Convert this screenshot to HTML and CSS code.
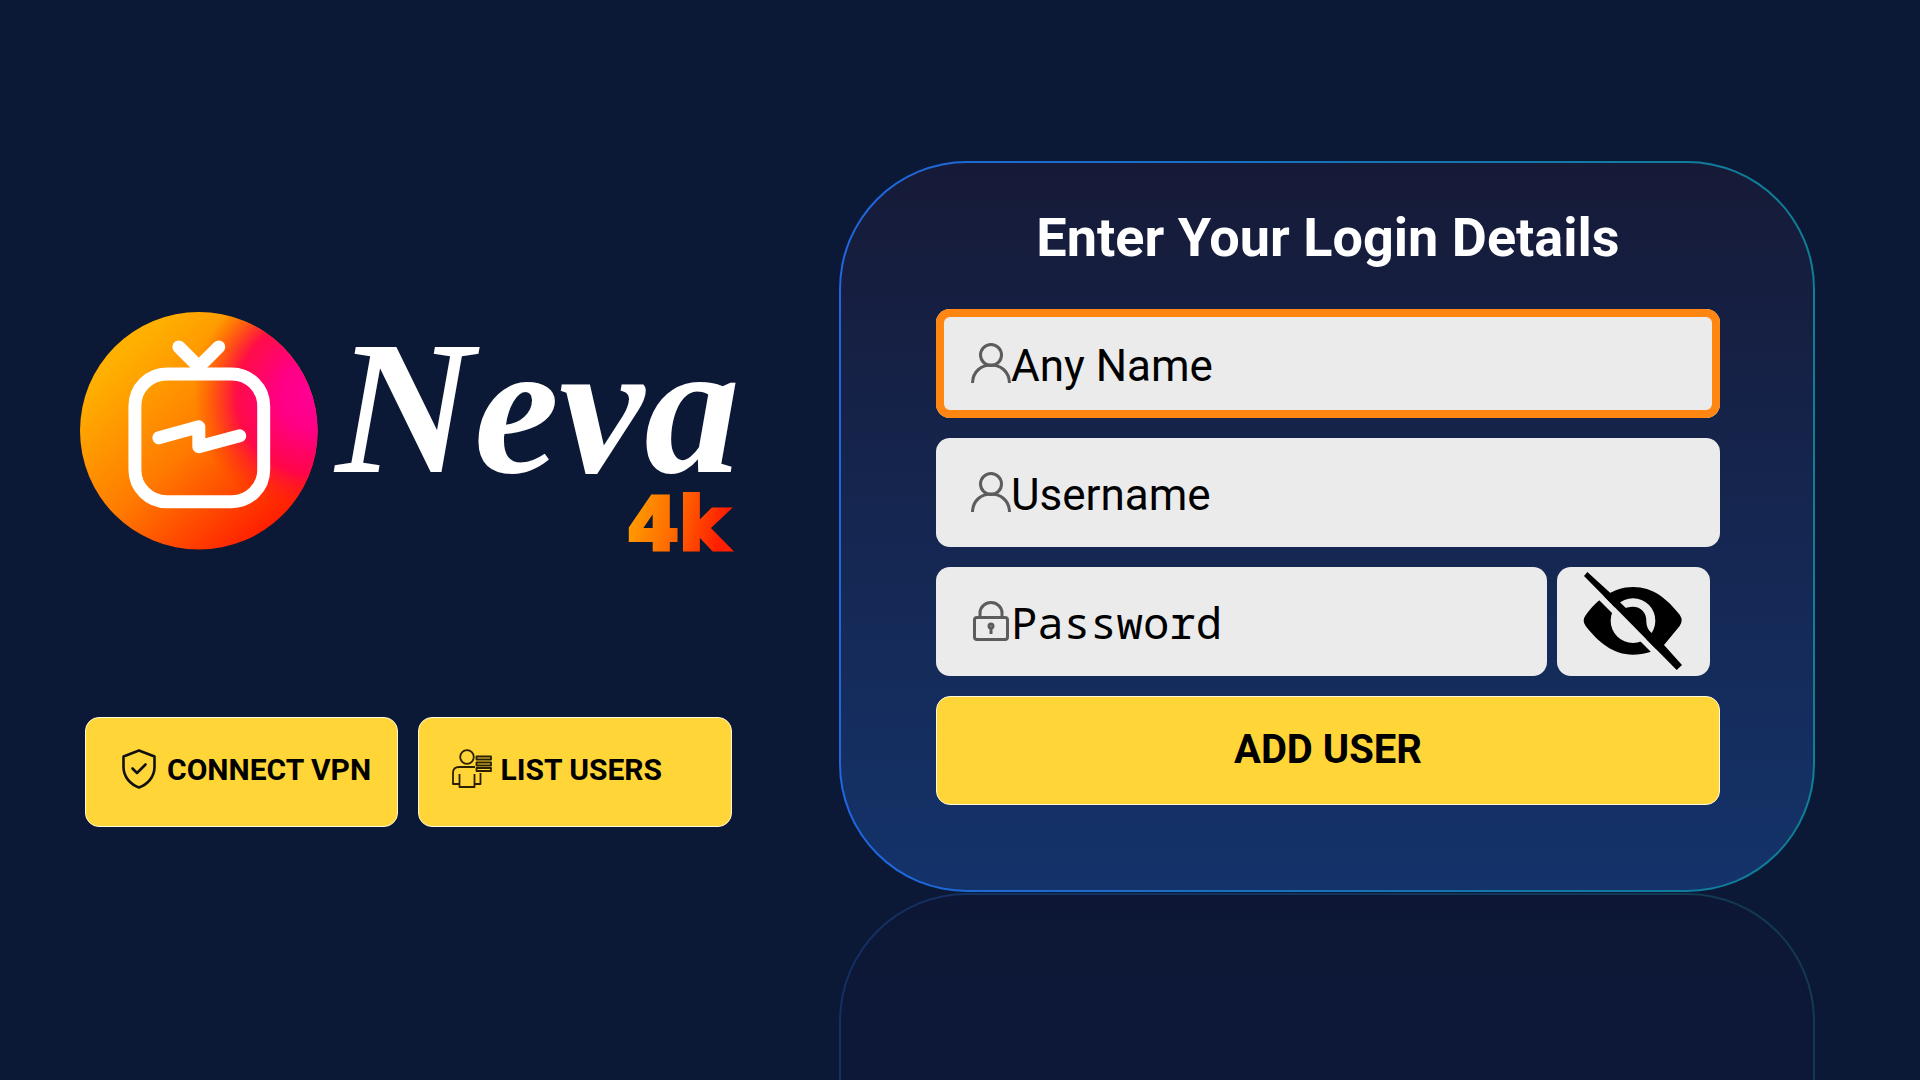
FILE: index.html
```html
<!DOCTYPE html>
<html lang="en">
<head>
  <meta charset="UTF-8" />
  <meta name="viewport" content="width=device-width, initial-scale=1.0"/>
  <title>Neva 4k - Login</title>
  <link rel="stylesheet" href="styles.css">
</head>
<body>
  <main class="page">
    <section class="brand">
      <svg class="logo" viewBox="0 0 655 240" role="img" aria-label="Neva 4k">
        <defs>
          <linearGradient id="warm" x1="0.05" y1="0.3" x2="0.7" y2="1">
            <stop offset="0" stop-color="#ffb000"/>
            <stop offset="0.5" stop-color="#ff7a00"/>
            <stop offset="1" stop-color="#ff1e00"/>
          </linearGradient>
          <radialGradient id="pink" gradientUnits="userSpaceOnUse" cx="236" cy="84" r="122">
            <stop offset="0" stop-color="#ff0096"/>
            <stop offset="0.3" stop-color="#ff0084"/>
            <stop offset="0.65" stop-color="#ff0050" stop-opacity="0.9"/>
            <stop offset="1" stop-color="#ff2800" stop-opacity="0"/>
          </radialGradient>
          <linearGradient id="fourk" x1="0" y1="0" x2="1" y2="0.2">
            <stop offset="0" stop-color="#ffa800"/>
            <stop offset="0.5" stop-color="#ff6e00"/>
            <stop offset="1" stop-color="#ff1e00"/>
          </linearGradient>
        </defs>
        <circle cx="119" cy="119" r="119" fill="url(#warm)"/>
        <circle cx="119" cy="119" r="119" fill="url(#pink)"/>
        <g fill="none" stroke="#fff" stroke-width="13" stroke-linecap="round" stroke-linejoin="round">
          <rect x="55" y="62" width="129" height="128" rx="32"/>
          <path d="M99 35 L119 55 L139 35"/>
          <path d="M79 126 L119 115 L119 135 L160 124"/>
        </g>
        <text class="logo-name" x="256" y="160">Neva</text>
        <text class="logo-4k" x="649" y="238" text-anchor="end" fill="url(#fourk)" stroke="url(#fourk)">4k</text>
      </svg>

      <div class="actions">
        <button type="button" class="btn btn-small">
          <svg class="icon" viewBox="0 0 40 40" fill="none" stroke="#111" stroke-width="2.6" stroke-linejoin="round" stroke-linecap="round">
            <path d="M20 1.5 L35.5 7.5 V18 C35.5 28 28.5 35.5 20 38.5 C11.5 35.5 4.5 28 4.5 18 V7.5 Z"/>
            <path d="M13.5 19.5 L18 24 L26.5 15.5"/>
          </svg>
          <span>CONNECT VPN</span>
        </button>
        <button type="button" class="btn btn-small">
          <svg class="icon" viewBox="0 0 40 40" fill="none" stroke="#2a2000" stroke-width="1.8" stroke-linejoin="round">
            <circle cx="15" cy="8" r="6.8"/>
            <path d="M23 18 H7 Q1 18 1 24 V35 H8 M7.5 25 V38 H22.5 V25 M22.5 35 H28.5 V24"/>
            <path d="M24.5 7.5 H39 V10.5 H24.5 Z M24.5 13.5 H39 V16.5 H24.5 Z M24.5 19 H39 V22 H24.5 Z"/>
          </svg>
          <span>LIST USERS</span>
        </button>
      </div>
    </section>

    <section class="login">
      <form class="card">
        <h1>Enter Your Login Details</h1>

        <label class="field active">
          <svg class="icon" viewBox="0 0 40 40" fill="none" stroke="#5c5c5c" stroke-width="3">
            <circle cx="20" cy="12" r="10.5"/>
            <path d="M1.5 40 C2 16 38 16 38.5 40"/>
          </svg>
          <input type="text" id="anyName" placeholder="Any Name" aria-label="Any Name">
        </label>

        <label class="field">
          <svg class="icon" viewBox="0 0 40 40" fill="none" stroke="#5c5c5c" stroke-width="3">
            <circle cx="20" cy="12" r="10.5"/>
            <path d="M1.5 40 C2 16 38 16 38.5 40"/>
          </svg>
          <input type="text" id="username" placeholder="Username" aria-label="Username">
        </label>

        <div class="password-row">
          <label class="field">
            <svg class="icon" viewBox="0 0 40 40" fill="none" stroke="#5c5c5c" stroke-width="3">
              <rect x="3.5" y="16.5" width="33" height="22" rx="2.5"/>
              <path d="M9 16 V12 A11 10.5 0 0 1 31 12 V16"/>
              <circle cx="20" cy="25" r="2"/>
              <path d="M20 26 V33"/>
            </svg>
            <input type="password" id="password" class="mono" placeholder="Password" aria-label="Password">
          </label>
          <button type="button" class="toggle" aria-label="Show password">
            <svg viewBox="0 0 300 294">
              <path d="M8 130 C40 84 90 45 150 45 C210 45 252 80 290 128 Q302 145 290 162 L243 219 C215 238 185 248 150 248 C90 248 45 210 8 162 Q-4 146 8 130 Z"/>
              <circle class="cut" cx="150" cy="146" r="67"/>
              <path d="M116 112 C160 92 192 112 190 150 Q190 170 208 188 L200 204 L104 108 Z"/>
              <path class="cut" d="M3 12 L281 294 L270 306 L-8 28 Z"/>
              <path d="M13 0 L83 64 L243 219 L297 279 L281 294 L3 12 Z"/>
            </svg>
          </button>
        </div>

        <button type="submit" class="btn btn-submit">ADD USER</button>
      </form>
      <div class="reflection"></div>
    </section>
  </main>
</body>
</html>
```
FILE: styles.css
```css
* {
  box-sizing: border-box;
}
body {
  margin: 0;
  font-family: Roboto, sans-serif;
  background-color: #0b1836;
  color: #000;
}
.page {
  display: grid;
  grid-template-columns: minmax(0, 67fr) minmax(0, 100fr);
  column-gap: 105px;
  min-height: 100vh;
  padding: 161px 105px 0 80px;
}

/* Left side */
.brand {
  padding-top: 151px;
}
.logo {
  display: block;
  width: 100%;
  overflow: visible;
}
.logo-name {
  font-family: "Liberation Serif", serif;
  font-size: 192px;
  font-weight: bold;
  font-style: italic;
  fill: #fff;
}
.logo-4k {
  font-family: "DejaVu Sans", sans-serif;
  font-size: 74px;
  font-weight: bold;
  stroke-width: 4px;
}
.actions {
  display: grid;
  grid-template-columns: 1fr 1fr;
  gap: 20px;
  margin: 165px 2px 0 5px;
}
.btn {
  height: 110px;
  border: 1px solid #fff8dc;
  border-radius: 14px;
  background-color: #ffd538;
  color: #000;
  font-family: inherit;
  font-weight: bold;
  cursor: pointer;
}
.btn-small {
  display: flex;
  align-items: center;
  gap: 8px;
  padding: 0 0 5px 33px;
  font-size: 30px;
  white-space: nowrap;
}
.icon {
  flex: none;
  width: 40px;
  height: 40px;
}

/* Login card */
.login {
  display: flex;
  flex-direction: column;
}
.card {
  display: flex;
  flex-direction: column;
  gap: 20px;
  padding: 43px 93px 85px 95px;
  border: 2px solid transparent;
  border-radius: 128px;
  background:
    linear-gradient(#161a37, #14336a) padding-box,
    linear-gradient(90deg, #1f66e0, #0f7f93) border-box;
}
h1 {
  margin: 0 0 20px;
  font-size: 54px;
  line-height: 63px;
  text-align: center;
  color: #fff;
}
.field {
  display: flex;
  align-items: center;
  height: 109px;
  padding: 0 35px 2px;
  border-radius: 14px;
  background-color: #ebebeb;
}
.field.active {
  box-shadow: inset 0 0 0 8px #ff8610;
}
.field input {
  flex: 1;
  min-width: 0;
  padding: 6px 0 0;
  border: none;
  outline: none;
  background: none;
  font-family: inherit;
  font-size: 44px;
}
.field input.mono {
  padding: 2px 0 0;
  font-family: "Noto Sans Mono", "DejaVu Sans Mono", monospace;
}
.field input::placeholder {
  color: #000;
  opacity: 1;
}
.password-row {
  display: grid;
  grid-template-columns: minmax(0, 4fr) minmax(0, 1fr);
  gap: 10px;
  padding-right: 10px;
}
.toggle {
  display: flex;
  align-items: center;
  justify-content: center;
  padding: 0 2px 2px 0;
  border: none;
  border-radius: 14px;
  background-color: #ebebeb;
  cursor: pointer;
}
.toggle svg {
  width: 100px;
  height: 98px;
}
.toggle .cut {
  fill: #ebebeb;
}
.btn-submit {
  height: 109px;
  padding: 0 0 2px;
  font-size: 40px;
}

/* Faint mirror of the card, runs off the bottom of the page */
.reflection {
  flex: 1;
  margin-top: 1px;
  border: 2px solid transparent;
  border-bottom: none;
  border-radius: 128px 128px 0 0;
  background:
    linear-gradient(#0d1735, #0d1839) padding-box,
    linear-gradient(90deg, #142f63, #123a52) border-box;
}
```
